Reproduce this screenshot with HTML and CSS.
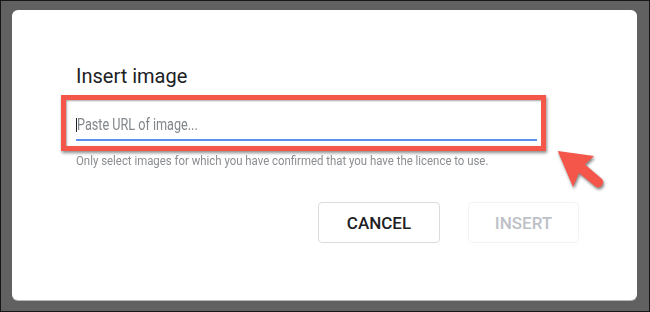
FILE: index.html
```html
<!DOCTYPE html>
<html lang="en">
<head>
<meta charset="utf-8">
<title>Insert image</title>
<link rel="stylesheet" href="styles.css">
</head>
<body>
<div class="frame">
  <div class="dialog">
    <h1 class="title">Insert image</h1>
    <div class="highlight">
      <div class="field"><span class="caret"></span><span class="placeholder">Paste URL of image...</span></div>
    </div>
    <p class="hint"><span class="hint-text">Only select images for which you have confirmed that you have the licence to use.</span></p>
    <div class="actions">
      <button class="btn btn-cancel">CANCEL</button>
      <button class="btn btn-insert" disabled>INSERT</button>
    </div>
  </div>
  <svg class="arrow" viewBox="545 140 70 60" width="70" height="60" aria-hidden="true">
    <path d="M556.7,150 L593,155 L584,163.5 L601,178 A5.2,5.2 0 0 1 595,186 L578,172 L572,186 Z" fill="#f5564a"/>
  </svg>
</div>
</body>
</html>
```
FILE: styles.css
```css
html, body {
  margin: 0;
  padding: 0;
}
body {
  width: 650px;
  height: 312px;
  background: #616161;
  font-family: Roboto, "Noto Sans", Arial, sans-serif;
}
.frame {
  position: relative;
  box-sizing: border-box;
  width: 650px;
  height: 312px;
  border: 1px solid #161616;
  padding: 9px 0 0 11px;
}
.dialog {
  box-sizing: border-box;
  width: 625px;
  height: 290px;
  background: #fff;
  border-radius: 6px;
  box-shadow: 0 1px 0 #b8b8b8;
  padding: 54px 58px 0 49px;
}
.title {
  margin: 0 0 7px;
  padding-left: 15px;
  font-size: 20px;
  line-height: 24px;
  font-weight: 400;
  color: #202124;
}
.highlight {
  box-sizing: border-box;
  width: 485px;
  border: 5px solid #f5564a;
  padding: 0 4px 5px 10px;
  box-shadow: 1px 2px 3px rgba(0, 0, 0, 0.45), inset 1px 1px 2px rgba(0, 0, 0, 0.35);
}
.field {
  display: flex;
  align-items: center;
  padding: 15px 0 4px;
  height: 20px;
  border-bottom: 2px solid #5a8ff0;
}
.caret {
  width: 1px;
  height: 14px;
  background: #202124;
}
.placeholder {
  display: inline-block;
  font-size: 16px;
  line-height: 20px;
  color: #80868b;
  transform: scaleX(0.79);
  transform-origin: left center;
}
.hint {
  margin: 2px 0 0;
  padding-left: 15px;
  font-size: 12px;
  line-height: 16px;
  color: #8a8d91;
  white-space: nowrap;
}
.hint-text {
  display: inline-block;
  transform: scaleX(0.95);
  transform-origin: left center;
}
.actions {
  display: flex;
  justify-content: flex-end;
  gap: 28px;
  margin-top: 33px;
}
.btn {
  box-sizing: border-box;
  height: 41px;
  border-radius: 4px;
  background: #fff;
  font-family: Roboto, "Noto Sans", Arial, sans-serif;
  font-size: 17px;
  font-weight: 500;
  padding: 0;
}
.btn-cancel {
  width: 122px;
  border: 1px solid #dadce0;
  color: #202124;
}
.btn-insert {
  width: 111px;
  border: 1px solid #f1f3f4;
  color: #bdc1c6;
}
.arrow {
  position: absolute;
  left: 545px;
  top: 140px;
  filter: drop-shadow(1.5px 2px 1.5px rgba(0, 0, 0, 0.5));
}
```
